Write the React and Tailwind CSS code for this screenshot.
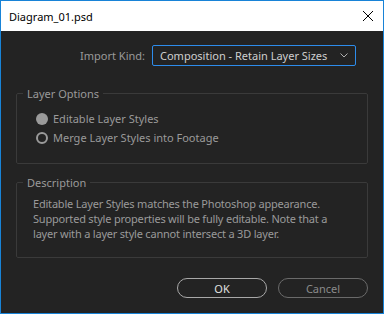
export default function App() {
  return (
    <div className="w-[384px] h-[314px] border border-[#1883d7] bg-[#232323] flex flex-col font-['Noto_Sans','Liberation_Sans',sans-serif] text-[11px] leading-[15px] overflow-hidden">
      {/* Title bar */}
      <div className="h-[30px] bg-white flex items-center justify-between pl-[8px] pr-[9px] shrink-0">
        <span className="text-black text-[11px]">Diagram_01.psd</span>
        <svg width="12" height="12" viewBox="0 0 12 12" className="text-black">
          <path d="M1 1L11 11M11 1L1 11" stroke="currentColor" strokeWidth="1" />
        </svg>
      </div>

      {/* Body */}
      <div className="flex-1 flex flex-col px-[15px]">
        {/* Import Kind */}
        <div className="flex items-center justify-end gap-[7px] mt-[14px] pr-[12px]">
          <span className="text-[#9a9a9a]">Import Kind:</span>
          <div className="w-[204px] h-[21px] border border-[#2d8ceb] rounded-[2px] flex items-center justify-between pl-[7px] pr-[7px]">
            <span className="text-[#cfcfcf]">Composition - Retain Layer Sizes</span>
            <svg width="8" height="5" viewBox="0 0 8 5">
              <path d="M0.5 0.5L4 4L7.5 0.5" fill="none" stroke="#b0b0b0" strokeWidth="1" />
            </svg>
          </div>
        </div>

        {/* Layer Options */}
        <fieldset className="mt-[20px] h-[78px] border border-[#3a3a3a] rounded-[2px] pl-[6px]">
          <legend className="px-[4px] text-[#9a9a9a]">Layer Options</legend>
          <div className="flex flex-col gap-[4px] pl-[13px] pt-[10px]">
            <div className="flex items-center gap-[5px]">
              <span className="w-[12px] h-[12px] rounded-full bg-[#9a9a9a]"></span>
              <span className="text-[#9a9a9a]">Editable Layer Styles</span>
            </div>
            <div className="flex items-center gap-[5px]">
              <span className="w-[12px] h-[12px] rounded-full border-2 border-[#9a9a9a]"></span>
              <span className="text-[#9a9a9a]">Merge Layer Styles into Footage</span>
            </div>
          </div>
        </fieldset>

        {/* Description */}
        <fieldset className="mt-[11px] h-[83px] border border-[#3a3a3a] rounded-[2px] pl-[6px]">
          <legend className="px-[4px] text-[#9a9a9a]">Description</legend>
          <p className="pl-[10px] pt-[6px] pr-[30px] text-[#9a9a9a] leading-[15px] tracking-[-0.2px]">
            Editable Layer Styles matches the Photoshop appearance. Supported style properties will be fully editable. Note that a layer with a layer style cannot intersect a 3D layer.
          </p>
        </fieldset>

        {/* Buttons */}
        <div className="flex justify-end gap-[11px] mt-[20px]">
          <button className="w-[90px] h-[20px] rounded-full border border-[#a8a8a8] text-[#e0e0e0] flex items-center justify-center">
            OK
          </button>
          <button className="w-[90px] h-[20px] rounded-full border border-[#6a6a6a] text-[#8a8a8a] flex items-center justify-center">
            Cancel
          </button>
        </div>
      </div>
    </div>
  );
}
